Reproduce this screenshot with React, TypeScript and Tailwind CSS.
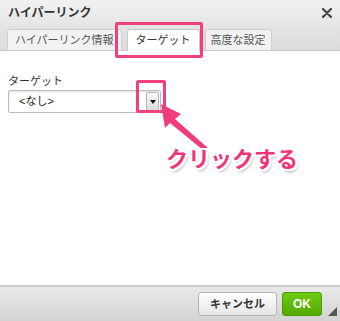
import React from "react";

const font = "font-['Liberation_Sans','Noto_Sans_CJK_JP',sans-serif]";

function Tab({ label, active, px }: { label: string; active?: boolean; px: string }) {
  return active ? (
    <div className={`relative -mb-px flex h-[22px] items-center rounded-t-[3px] border border-b-0 border-[#c9c9c9] bg-white text-[11px] text-[#333] ${px}`}>
      {label}
    </div>
  ) : (
    <div className={`flex h-[21px] items-center rounded-t-[3px] border border-b-0 border-[#cfcfcf] bg-[#f2f2f2] text-[11px] text-[#555] ${px}`}>
      {label}
    </div>
  );
}

export default function App() {
  return (
    <div className={`relative flex h-[321px] w-[340px] flex-col overflow-hidden bg-white ${font}`}>
      {/* title */}
      <div className="flex h-[25px] shrink-0 items-center justify-between bg-gradient-to-b from-[#f1f1f1] to-[#e6e6e6] pl-[8px] pr-[8px]">
        <span className="text-[12px] font-bold text-[#333]">ハイパーリンク</span>
        <svg width="10" height="10" viewBox="0 0 10 10">
          <path d="M1 1L9 9M9 1L1 9" stroke="#4a4a4a" strokeWidth="2.4" strokeLinecap="round" />
        </svg>
      </div>

      {/* tabs */}
      <div className="flex h-[26px] shrink-0 items-end gap-[5px] border-b border-[#cbcbcb] bg-gradient-to-b from-[#e4e4e4] to-[#dcdcdc] pl-[7px]">
        <Tab label="ハイパーリンク情報" px="px-[7px]" />
        <Tab label="ターゲット" active px="px-[8px]" />
        <Tab label="高度な設定" px="px-[5px]" />
      </div>

      {/* body */}
      <div className="flex flex-1 flex-col px-[8px] pt-[23px]">
        <span className="text-[11px] leading-[14px] text-[#333]">ターゲット</span>
        <div className="mt-[2px] flex h-[23px] w-[153px] items-center justify-between rounded-[2px] border border-[#bcbcbc] bg-white pl-[10px] pr-[1px] shadow-[inset_0_1px_2px_rgba(0,0,0,0.12)]">
          <span className="text-[11px] text-[#222]">&lt;なし&gt;</span>
          <div className="flex h-[19px] w-[13px] items-center justify-center rounded-[2px] border border-[#b6b6b6] bg-gradient-to-b from-[#fafafa] to-[#dcdcdc]">
            <svg width="6" height="4" viewBox="0 0 6 4">
              <path d="M0 0H6L3 4Z" fill="#111" />
            </svg>
          </div>
        </div>
      </div>

      {/* footer */}
      <div className="relative flex h-[36px] shrink-0 items-center justify-end gap-[5px] border-t-2 border-[#cdcdcd] bg-gradient-to-b from-[#e9e9e9] to-[#d3d3d3] pr-[18px]">
        <div className="flex h-[24px] w-[79px] items-center justify-center rounded-[3px] border border-[#b5b5b5] bg-gradient-to-b from-[#ffffff] to-[#e6e6e6] text-[11px] font-bold text-[#333]">
          キャンセル
        </div>
        <div className="flex h-[24px] w-[40px] items-center justify-center rounded-[3px] border border-[#4b9a00] bg-gradient-to-b from-[#6fcb12] to-[#52a900] text-[12px] font-bold text-white">
          OK
        </div>
        <svg className="absolute bottom-[5px] right-[3px]" width="9" height="9" viewBox="0 0 9 9">
          <path d="M9 0V9H0Z" fill="#555" />
        </svg>
      </div>

      {/* annotations */}
      <div className="absolute left-[115px] top-[22px] h-[36px] w-[88px] rounded-[2px] border-[3px] border-[#f0417d]" />
      <div className="absolute left-[136px] top-[80px] h-[33px] w-[30px] rounded-[2px] border-[3px] border-[#f0417d]" />
      <svg className="absolute left-0 top-0" width="340" height="321" viewBox="0 0 340 321">
        <polygon
          points="161,104 181,114 175,119 208,148 203,150 170,123 165,128"
          fill="#f03c7c"
        />
      </svg>
      <span className="absolute left-[166px] top-[146px] text-[22px] font-bold leading-[28px] text-[#f0357a] [text-shadow:-2px_-2px_0_#fff,2px_-2px_0_#fff,-2px_2px_0_#fff,2px_2px_0_#fff,0_-2px_0_#fff,0_2px_0_#fff,-2px_0_0_#fff,2px_0_0_#fff,2px_3px_3px_rgba(0,0,0,0.35)]">
        クリックする
      </span>
    </div>
  );
}
